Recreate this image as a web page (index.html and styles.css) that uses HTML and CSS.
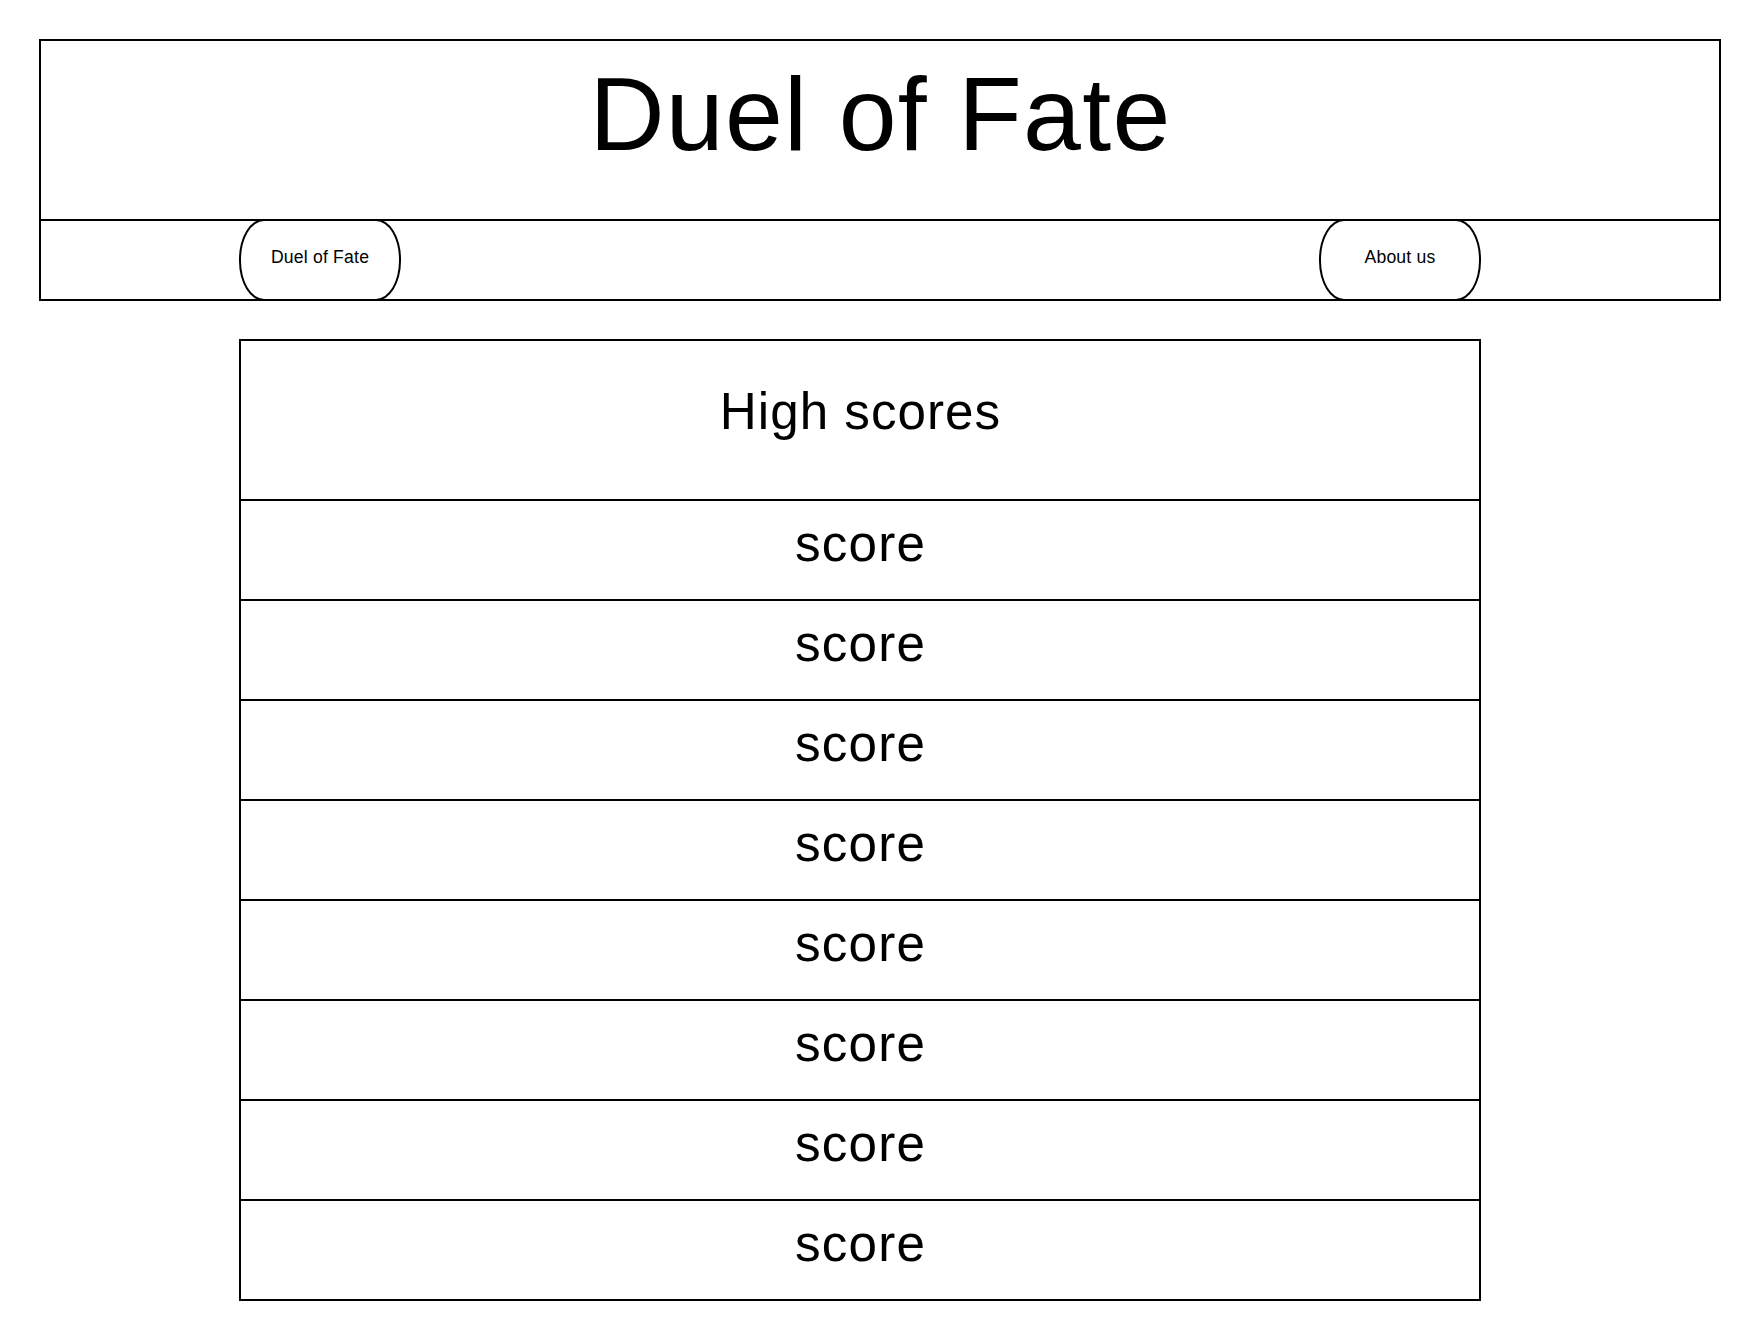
FILE: index.html
```html
<!DOCTYPE html>
<html lang="en">
<head>
<meta charset="utf-8">
<title>Duel of Fate</title>
<link rel="stylesheet" href="styles.css">
</head>
<body>
<header class="site-header">
  <div class="title-bar"><h1 class="site-title">Duel of Fate</h1></div>
  <nav class="nav-bar">
    <a class="nav-pill">Duel of Fate</a>
    <a class="nav-pill">About us</a>
  </nav>
</header>
<main class="scores">
  <div class="scores-head">High scores</div>
  <ul class="scores-list">
    <li class="score-row">score</li>
    <li class="score-row">score</li>
    <li class="score-row">score</li>
    <li class="score-row">score</li>
    <li class="score-row">score</li>
    <li class="score-row">score</li>
    <li class="score-row">score</li>
    <li class="score-row">score</li>
  </ul>
</main>
</body>
</html>
```
FILE: styles.css
```css
html, body {
  margin: 0;
  padding: 0;
  background: #fff;
}
body {
  font-family: "Liberation Sans", Arial, sans-serif;
  color: #000;
}
.site-header {
  margin: 39px 39px 0;
  border: 2px solid #000;
}
.title-bar {
  height: 180px;
  box-sizing: border-box;
  border-bottom: 2px solid #000;
}
.site-title {
  margin: 0;
  padding-top: 14px;
  padding-left: 1px;
  font-size: 104px;
  font-weight: 400;
  letter-spacing: 1.3px;
  line-height: normal;
  text-align: center;
}
.nav-bar {
  height: 78px;
  display: flex;
  justify-content: space-between;
  align-items: flex-start;
  padding: 0 238px 0 198px;
}
.nav-pill {
  box-sizing: border-box;
  width: 162px;
  height: 82px;
  margin: -2px 0;
  padding-bottom: 5px;
  border: 2px solid #000;
  border-radius: 25px / 40px;
  background: #fff;
  display: flex;
  align-items: center;
  justify-content: center;
  font-size: 17.6px;
  letter-spacing: 0.2px;
  color: #000;
  text-decoration: none;
}
.scores {
  display: block;
  margin: 38px 0 0 239px;
  width: 1242px;
  box-sizing: border-box;
  border: 2px solid #000;
  border-bottom: 0;
}
.scores-head {
  height: 160px;
  box-sizing: border-box;
  padding-top: 41px;
  padding-left: 1px;
  border-bottom: 2px solid #000;
  font-size: 51.2px;
  letter-spacing: 1px;
  line-height: normal;
  text-align: center;
}
.scores-list {
  margin: 0;
  padding: 0;
  list-style: none;
}
.score-row {
  height: 100px;
  box-sizing: border-box;
  padding-top: 13px;
  padding-left: 1px;
  border-bottom: 2px solid #000;
  font-size: 51.2px;
  letter-spacing: 1.2px;
  line-height: normal;
  text-align: center;
}
```
